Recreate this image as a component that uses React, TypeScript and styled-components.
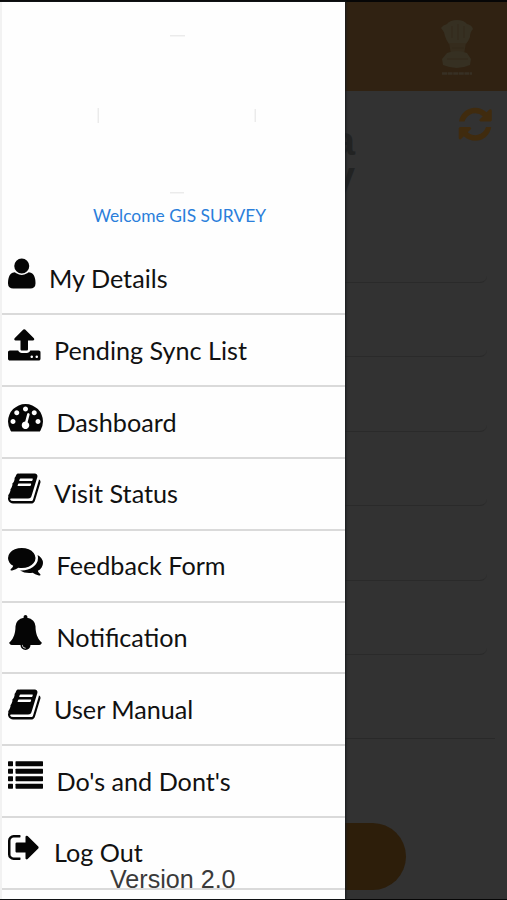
import React from "react";
import styled, { createGlobalStyle } from "styled-components";

const GlobalStyle = createGlobalStyle`
  * { box-sizing: border-box; }
  body { margin: 0; background: #000; overflow: hidden; }
`;

const Screen = styled.div`
  position: relative;
  width: 507px;
  height: 900px;
  padding: 2px 0 1px;
  background: #060606;
  overflow: hidden;
  font-family: Lato, "Liberation Sans", sans-serif;
`;

const Page = styled.main`
  display: flex;
  flex-direction: column;
  height: 897px;
  background: #323232;
`;

const Header = styled.header`
  display: flex;
  justify-content: flex-end;
  flex: none;
  height: 89px;
  padding: 15px 30px 0 0;
  background: #302212;
`;

const TitleRow = styled.div`
  display: flex;
  justify-content: space-between;
  flex: none;
  height: 132px;
  padding: 14px 13px 0 0;
  color: #402b0e;
`;

const Title = styled.h1`
  display: flex;
  flex-direction: column;
  width: 355px;
  margin: 19px 0 0;
  font: bold 41px/35px "Liberation Sans", sans-serif;
  text-align: right;
  color: #222323;
`;

const Field = styled.div`
  flex: none;
  width: 472px;
  height: 60px;
  margin: 0 0 14.4px 15px;
  border-bottom: 1.5px solid #2a2a2a;
  border-radius: 0 0 7px 7px;
`;

const Divider = styled.div`
  flex: none;
  width: 480px;
  height: 1px;
  margin: 69px 0 84px 15px;
  background: #292929;
`;

const Submit = styled.div`
  flex: none;
  width: 306px;
  height: 67px;
  margin-left: 100px;
  border-radius: 34px;
  background: #2d1e0a;
`;

const Drawer = styled.aside`
  position: absolute;
  top: 2px;
  left: 0;
  width: 345px;
  height: 897px;
  overflow: hidden;
  background: #fefefe;
  border-left: 2px solid #f2f2f2;
  box-shadow: 0 0 2px 1px #161a1c;
`;

const Profile = styled.section`
  display: flex;
  flex-direction: column;
  align-items: center;
  height: 241.6px;
  padding: 33px 0 0 7px;
`;

const Welcome = styled.p`
  margin: 9px 0 0 5px;
  font-size: 17.4px;
  line-height: 24px;
  white-space: nowrap;
  color: #2b7fdb;
`;

const Menu = styled.ul`
  margin: 0 0 0 -2px;
  padding: 0;
  list-style: none;
`;

const Item = styled.li`
  display: flex;
  align-items: flex-start;
  gap: 13.5px;
  height: 71.8px;
  padding: 12.2px 0 0 8px;
  border-bottom: 2px solid #dadada;
  color: #050505;
`;

const Label = styled.span`
  margin-top: 5.2px;
  font-size: 25.2px;
  line-height: 34px;
  white-space: nowrap;
  color: #111;
`;

const Version = styled.div`
  position: absolute;
  left: 108px;
  top: 862px;
  font: 25.1px/30px "Liberation Sans", sans-serif;
  white-space: nowrap;
  color: #3a3a3a;
`;

const Glyph = styled.svg`
  display: block;
  flex: none;
  fill: currentColor;
`;

type IconName = "user" | "upload" | "gauge" | "book" | "comments" | "bell" | "list" | "signOut";

const BOOK =
  "M1703 478q40 57 18 129l-275 906q-19 64-76.5 107.5t-122.5 43.5h-923q-77 0-148.5-53.5t-99.5-131.5q-24-67-2-127 0-4 3-27t4-37q1-8-3-21.5t-3-19.5q2-11 8-21t16.5-23.5 16.5-23.5q23-38 45-91.5t30-91.5q3-10 .5-30t-.5-28q3-11 17-28t17-23q21-36 42-92t25-90q1-9-2.5-32t.5-28q4-13 22-30.5t22-22.5q19-26 42.5-84.5t27.5-96.5q1-8-3-25.5t-2-26.5q2-8 9-18t18-23 17-21q8-12 16.5-30.5t15-35 16-36 19.5-32 26.5-23.5 36-11.5 47.5 5.5l-1 3q38-9 51-9h761q74 0 114 56t18 130l-274 906q-36 119-71.5 153.5t-128.5 34.5h-869q-27 0-38 15-11 16-1 43 24 70 144 70h923q29 0 56-15.5t35-41.5l300-987q7-22 5-57 38 15 59 43zm-1064 2q-4 13 2 22.5t20 9.5h608q13 0 25.5-9.5t16.5-22.5l21-64q4-13-2-22.5t-20-9.5h-608q-13 0-25.5 9.5t-16.5 22.5zm-83 256q-4 13 2 22.5t20 9.5h608q13 0 25.5-9.5t16.5-22.5l21-64q4-13-2-22.5t-20-9.5h-608q-13 0-25.5 9.5t-16.5 22.5z";

const ICONS: Record<IconName, { x: number; w: number; body: React.ReactNode }> = {
  user: {
    x: 0,
    w: 1408,
    body: (
      <path
        transform="translate(0 1536) scale(1 -1)"
        d="M1408 131q0-120-73-189.5t-194-69.5h-874q-121 0-194 69.5t-73 189.5q0 53 3.5 103.5t14 109t26.5 108.5t43 97.5t62 81t85.5 53.5t111.5 20q9 0 42-21.5t74.5-48t108-48t133.5-21.5t133.5 21.5t108 48t74.5 48t42 21.5q61 0 111.5-20t85.5-53.5t62-81t43-97.5t26.5-108.5t14-109t3.5-103.5zM1088 1024q0-159-112.5-271.5t-271.5-112.5t-271.5 112.5t-112.5 271.5t112.5 271.5t271.5 112.5t271.5-112.5t112.5-271.5z"
      />
    ),
  },
  upload: {
    x: 64,
    w: 1664,
    body: (
      <path d="M1344 1472q0-26-19-45t-45-19-45 19-19 45 19 45 45 19 45-19 19-45zm256 0q0-26-19-45t-45-19-45 19-19 45 19 45 45 19 45-19 19-45zm128-224v320q0 40-28 68t-68 28h-1472q-40 0-68-28t-28-68v-320q0-40 28-68t68-28h427q21 56 70.5 92t110.5 36h256q61 0 110.5-36t70.5-92h427q40 0 68 28t28 68zm-325-648q-17 40-59 40h-256v448q0 26-19 45t-45 19h-256q-26 0-45-19t-19-45v-448h-256q-42 0-59-40-17-39 14-69l448-448q18-19 45-19t45 19l448 448q31 30 14 69z" />
    ),
  },
  gauge: {
    x: 0,
    w: 1792,
    body: (
      <path d="M384 1152q0-53-37.5-90.5t-90.5-37.5-90.5 37.5-37.5 90.5 37.5 90.5 90.5 37.5 90.5-37.5 37.5-90.5zm192-448q0-53-37.5-90.5t-90.5-37.5-90.5 37.5-37.5 90.5 37.5 90.5 90.5 37.5 90.5-37.5 37.5-90.5zm428 481l101-382q6-26-7.5-48.5t-38.5-29.5-48 6.5-30 39.5l-101 382q-60 5-107 43.5t-63 98.5q-20 77 20 146t117 89 146-20 89-117q16-60-6-117t-72-91zm660-33q0-53-37.5-90.5t-90.5-37.5-90.5 37.5-37.5 90.5 37.5 90.5 90.5 37.5 90.5-37.5 37.5-90.5zm-640-640q0-53-37.5-90.5t-90.5-37.5-90.5 37.5-37.5 90.5 37.5 90.5 90.5 37.5 90.5-37.5 37.5-90.5zm448 192q0-53-37.5-90.5t-90.5-37.5-90.5 37.5-37.5 90.5 37.5 90.5 90.5 37.5 90.5-37.5 37.5-90.5zm320 448q0 261-141 483-19 29-54 29h-1402q-35 0-54-29-141-221-141-483 0-182 71-348t191-286 286-191 348-71 348 71 286 191 191 286 71 348z" />
    ),
  },
  book: { x: 64, w: 1664, body: <path d={BOOK} /> },
  comments: {
    x: 0,
    w: 1792,
    body: (
      <path d="M1408 768q0 139-94 257t-256.5 186.5-353.5 68.5q-86 0-176-16-124 88-278 128-36 9-86 16h-3q-11 0-20.5-8t-11.5-21q-1-3-1-6.5t.5-6.5 2-6l2.5-5 3.5-5.5 4-5 4.5-5 4-4.5q5-6 23-25t26-29.5 22.5-29 25-38.5 20.5-44q-124-72-195-177t-71-224q0-139 94-257t256.5-186.5 353.5-68.5 353.5 68.5 256.5 186.5 94 257zm384 256q0 120-71 224.5t-195 176.5q10 24 20.5 44t25 38.5 22.5 29 26 29.5 23 25q1 1 4 4.5t4.5 5 4 5 3.5 5.5l2.5 5 2 6 .5 6.5-1 6.5q-3 14-13 22t-22 7q-50-7-86-16-154-40-278-128-90 16-176 16-271 0-472-132 58 4 88 4 161 0 309-45t264-129q125-92 192-212t67-254q0-77-23-152 129 71 204 178t75 230z" />
    ),
  },
  bell: {
    x: 0,
    w: 1792,
    body: (
      <path d="M912 1696q0-16-16-16-59 0-101.5-42.5t-42.5-101.5q0-16-16-16t-16 16q0 73 51.5 124.5t124.5 51.5q16 0 16-16zm816-288q0 52-38 90t-90 38h-448q0 106-75 181t-181 75-181-75-75-181h-448q-52 0-90-38t-38-90q50-42 91-88t85-119.5 74.5-158.5 50-206 19.5-260q0-152 117-282.5t307-158.5q-8-19-8-39 0-40 28-68t68-28 68 28 28 68q0 20-8 39 190 28 307 158.5t117 282.5q0 139 19.5 260t50 206 74.5 158.5 85 119.5 91 88z" />
    ),
  },
  list: {
    x: 0,
    w: 1792,
    body: [160, 544, 928, 1312].map((y) => (
      <React.Fragment key={y}>
        <rect x="0" y={y} width="256" height="256" rx="32" />
        <rect x="384" y={y} width="1408" height="256" rx="32" />
      </React.Fragment>
    )),
  },
  signOut: {
    x: 64,
    w: 1664,
    body: (
      <path d="M704 1440q0 4 1 20t.5 26.5-3 23.5-10 19.5-20.5 6.5h-320q-119 0-203.5-84.5t-84.5-203.5v-704q0-119 84.5-203.5t203.5-84.5h320q13 0 22.5 9.5t9.5 22.5q0 4 1 20t.5 26.5-3 23.5-10 19.5-20.5 6.5h-320q-66 0-113 47t-47 113v704q0 66 47 113t113 47h312l11.5 1 11.5 3 8 5.5 7 9 2 13.5zm928-544q0 26-19 45l-544 544q-19 19-45 19t-45-19-19-45v-288h-448q-26 0-45-19t-19-45v-384q0-26 19-45t45-19h448v-288q0-26 19-45t45-19 45 19l544 544q19 19 19 45z" />
    ),
  },
};

const Icon = ({ name }: { name: IconName }) => {
  const { x, w, body } = ICONS[name];
  return (
    <Glyph width={(w * 35) / 1792} height={35} viewBox={`${x} 0 ${w} 1792`}>
      {body}
    </Glyph>
  );
};

const Refresh = () => (
  <Glyph width={38.5} height={38.5} viewBox="0 0 1792 1792">
    <path d="M1639 1056q0 5-1 7-64 268-268 434.5t-478 166.5q-146 0-282.5-55t-243.5-157l-129 129q-19 19-45 19t-45-19-19-45v-448q0-26 19-45t45-19h448q26 0 45 19t19 45-19 45l-137 137q71 66 161 102t187 36q134 0 250-65t186-179q11-17 53-117 8-23 30-23h192q13 0 22.5 9.5t9.5 22.5zm25-800v448q0 26-19 45t-45 19h-448q-26 0-45-19t-19-45 19-45l138-138q-148-137-349-137-134 0-250 65t-186 179q-11 17-53 117-8 23-30 23h-199q-13 0-22.5-9.5t-9.5-22.5v-7q65-268 270-434.5t480-166.5q146 0 284 55.5t245 156.5l130-129q19-19 45-19t45 19 19 45z" />
  </Glyph>
);

const Emblem = () => (
  <Glyph width={38} height={60} viewBox="0 0 38 60">
    <g fill="#363022">
      <path d="M2 11Q4 8 8 7 11 3 18 3 25 3 28 7 33 8 34 12 31 15 31 20 29 25 27 27H10Q7 23 6 19 5 14 2 11Z" />
      <path d="M10 26H27L25 37H12Z" fill="#352c1d" />
      <path d="M8 36Q18 32 28 36L32 42 31 48Q18 54 4 48L3 42Z" />
    </g>
    <path d="M3 56.500H33" stroke="#373024" strokeWidth="2.500" strokeDasharray="5 .6" />
    <path d="M13 9V21M19 7V23M25 9V21M8 42H29M13 31H25" stroke="#32291b" strokeWidth="1" fill="none" />
  </Glyph>
);

const AvatarFrame = () => (
  <Glyph width={160} height={160} viewBox="0 0 160 160">
    <g stroke="#ebebeb" strokeWidth="1.500" fill="none">
      <path d="M73 .75H88M73 157.750H87M1.250 73V88M158.250 74V87" />
    </g>
  </Glyph>
);

const MENU: { icon: IconName; label: string }[] = [
  { icon: "user", label: "My Details" },
  { icon: "upload", label: "Pending Sync List" },
  { icon: "gauge", label: "Dashboard" },
  { icon: "book", label: "Visit Status" },
  { icon: "comments", label: "Feedback Form" },
  { icon: "bell", label: "Notification" },
  { icon: "book", label: "User Manual" },
  { icon: "list", label: "Do's and Dont's" },
  { icon: "signOut", label: "Log Out" },
];

export default function App() {
  return (
    <Screen>
      <GlobalStyle />
      <Page>
        <Header>
          <Emblem />
        </Header>
        <TitleRow>
          <Title>
            <span>a</span>
            <span>y</span>
          </Title>
          <Refresh />
        </TitleRow>
        {[0, 1, 2, 3, 4, 5].map((n) => (
          <Field key={n} />
        ))}
        <Divider />
        <Submit />
      </Page>
      <Drawer>
        <Profile>
          <AvatarFrame />
          <Welcome>Welcome GIS SURVEY</Welcome>
        </Profile>
        <Menu>
          {MENU.map(({ icon, label }) => (
            <Item key={label}>
              <Icon name={icon} />
              <Label>{label}</Label>
            </Item>
          ))}
        </Menu>
        <Version>Version 2.0</Version>
      </Drawer>
    </Screen>
  );
}
